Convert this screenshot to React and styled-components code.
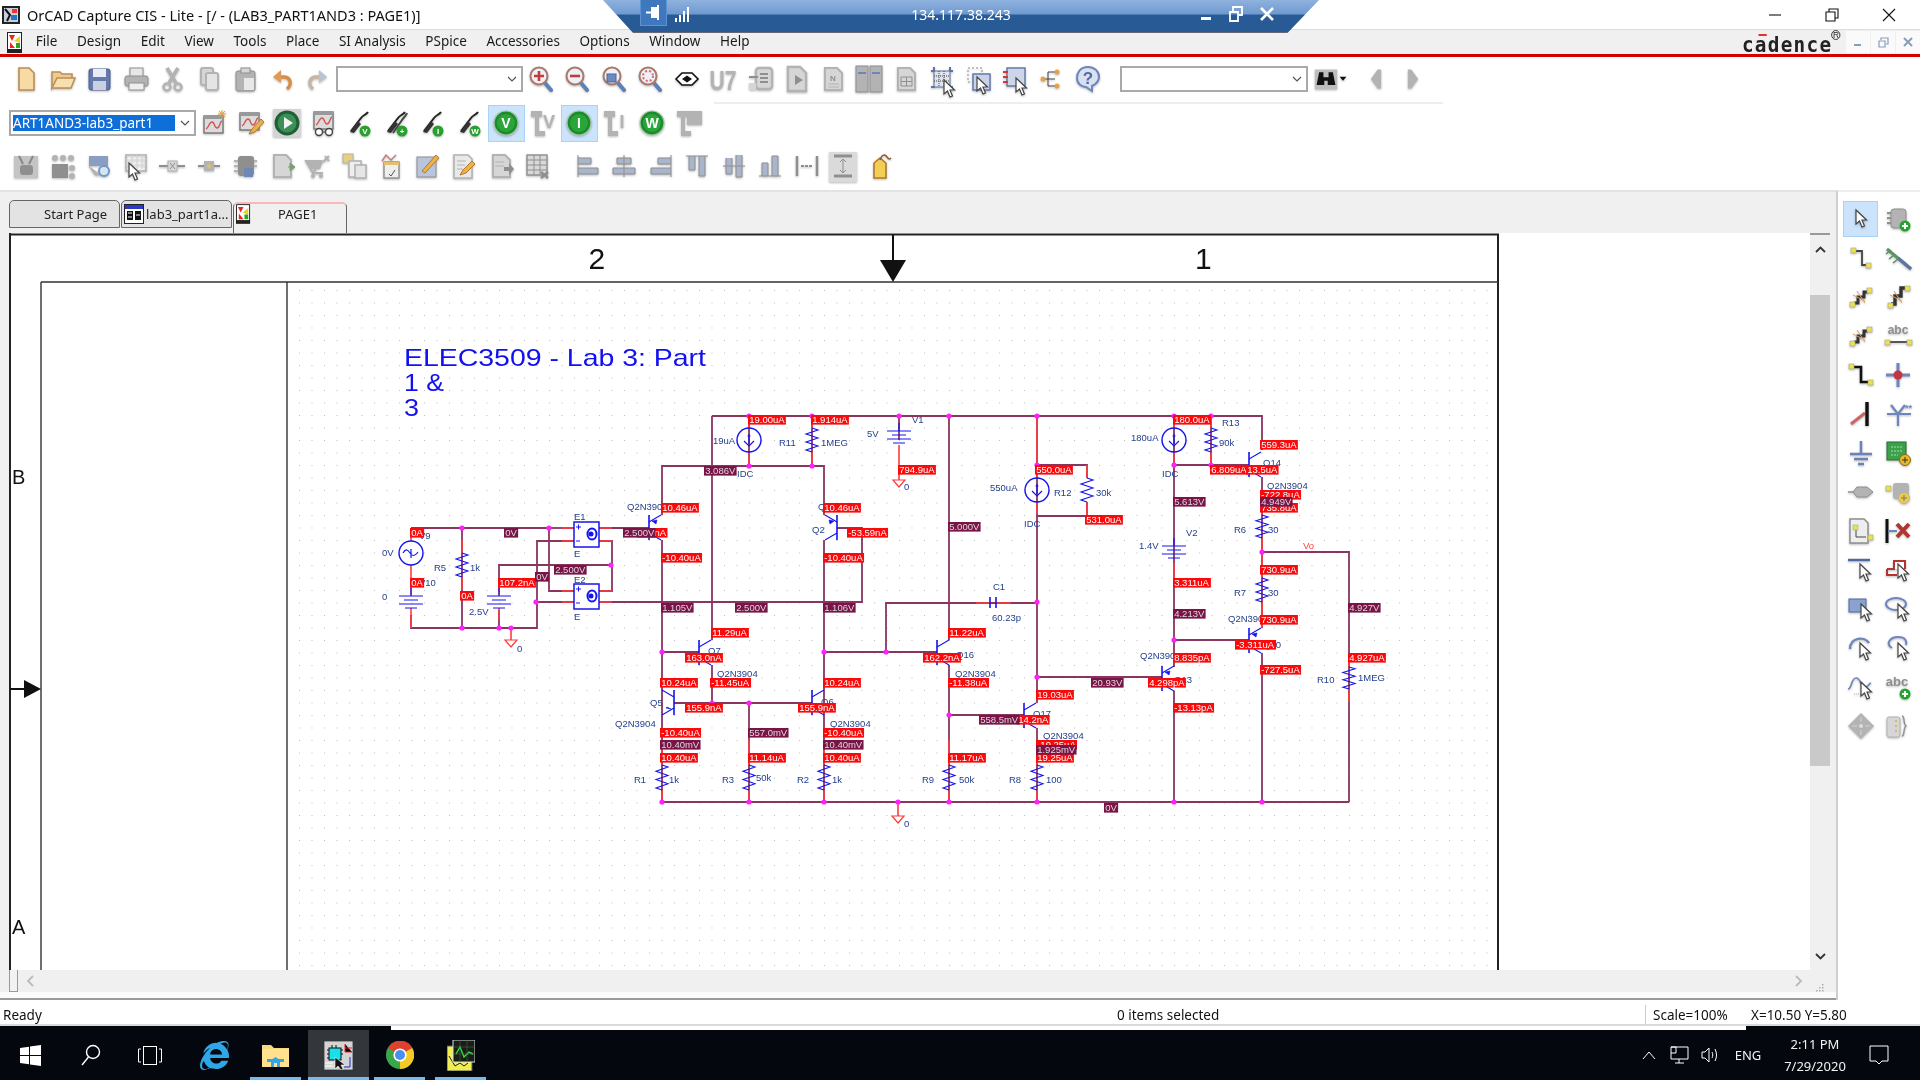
import React from "react";
import styled, { createGlobalStyle } from "styled-components";
import { FaInternetExplorer } from "react-icons/fa";

const GlobalStyle = createGlobalStyle`
  html, body { margin: 0; padding: 0; width: 1920px; height: 1080px; overflow: hidden; background: #fff; }
  #root { width: 1920px; height: 1080px; }
  * { box-sizing: border-box; }
`;

const UI = `"Noto Sans", "Open Sans", sans-serif`;
const ARIAL = `"Liberation Sans", Arial, sans-serif`;

const Screen = styled.div`
  position: relative; width: 1920px; height: 1080px; display: flex; flex-direction: column;
  font-family: ${UI}; color: #111; background: #fff; filter: blur(0.42px);
`;
const TitleBar = styled.header`
  height: 29px; flex: none; display: flex; align-items: center; background: #fff; padding-left: 2px; gap: 7px;
`;
const TitleText = styled.span`font-size: 14.5px; white-space: nowrap; color: #111;`;
const WinControls = styled.div`margin-left: auto; display: flex; align-items: center; padding-right: 3px;`;
const WinBtn = styled.button`
  width: 57px; height: 29px; border: 0; background: none; padding: 0; display: flex; align-items: center; justify-content: center; color: #111;
`;
const RemoteBar = styled.div`
  position: absolute; left: 603px; top: 0; width: 716px; height: 33px; color: #fff;
  clip-path: polygon(0 0, 100% 0, 95.6% 100%, 4.2% 100%);
  background: linear-gradient(#8fb2de 0, #6f9ad0 42%, #285a96 46%, #285a96 96%, #667 97%);
`;
const RemotePin = styled.div`
  position: absolute; left: 37px; top: 0; width: 27px; height: 26px; background: #3f78bd; border: 1px solid #5d93d2; border-top: 0;
  display: flex; align-items: center; justify-content: center;
`;
const RemoteSignal = styled.div`position: absolute; left: 71px; top: 5px;`;
const RemoteIp = styled.span`
  position: absolute; left: 0; right: 0; top: 6px; text-align: center; font-size: 14px; line-height: 18px; color: #fff; padding-left: 0;
`;
const RemoteCtl = styled.div`
  position: absolute; right: 45px; top: 6px; display: flex; gap: 17px; align-items: center;
`;
const MenuBar = styled.nav`
  height: 25px; flex: none; background: #f0f0f0; border-top: 1px solid #ddd; display: flex; align-items: center; padding-left: 7px;
`;
const MenuList = styled.div`display: flex; margin-left: 3px; margin-top: -3px;`;
const MenuItem = styled.span`font-size: 13.5px; color: #1a1a1a; padding: 0 9.8px; white-space: nowrap;`;
const Cadence = styled.div`
  position: relative; margin-left: auto; margin-right: 10px; font: bold 21px "DejaVu Sans Mono", monospace; letter-spacing: 1.4px;
  color: #222; line-height: 24px; top: 3px; transform: scaleX(.92);
`;
const CadenceBar = styled.i`position: absolute; left: 18px; top: 1px; width: 9px; height: 2px; background: #d33;`;
const CadenceMark = styled.i`
  position: absolute; right: -9px; top: -3px; font: 9px ${ARIAL}; width: 10px; height: 10px; line-height: 9px;
  border: 1px solid #333; border-radius: 50%; text-align: center; font-style: normal; letter-spacing: 0;
`;
const ChildCtl = styled.div`display: flex; gap: 1px; margin-right: 0;`;
const ChildBtn = styled.div`
  width: 24px; height: 22px; background: #fafafa; display: flex; align-items: center; justify-content: center;
`;
const RedRule = styled.div`height: 3px; flex: none; background: #d40000;`;
const ToolRow = styled.div`
  display: flex; align-items: center; height: ${p => p.$h}px; flex: none; padding-left: ${p => p.$pad}px; background: #fff;
`;
const RowRule = styled.div`height: 2px; flex: none; width: 729px; margin-left: 714px; background: #eee;`;
const ToolBtn = styled.div`
  width: ${p => p.$w || 36.5}px; flex: none; height: 37px; display: flex; align-items: center; justify-content: center;
  background: ${p => p.$hl ? "#cce4fb" : "transparent"};
  outline: ${p => p.$hl ? "1px solid #a8d2f6" : "none"}; outline-offset: -1px;
  margin-left: ${p => p.$ml || 0}px;
  margin-top: ${p => p.$mt || 0}px;
`;
const Combo = styled.div`
  width: ${p => p.$w}px; height: ${p => p.$h}px; flex: none; display: flex; align-items: center; border: 2px solid #a9a9a9; background: #fff;
  margin-left: ${p => p.$ml || 0}px; overflow: hidden; padding-left: 2px; position: relative; margin-top: ${p => p.$mt || 0}px;
`;
const ComboSel = styled.span`
  background: #0f6fd8; color: #fff; font-size: 13.5px; line-height: 16px; white-space: nowrap; overflow: hidden; width: 162px; direction: rtl;
  text-align: left;
`;
const Chevron = styled.svg`margin-left: auto; margin-right: 4px; flex: none;`;
const Body = styled.main`flex: none; height: 810px; display: flex;`;
const Workspace = styled.section`
  width: 1838px; flex: none; background: #f0f0f0; display: flex; flex-direction: column; border-top: 2px solid #e2e2e2; border-right: 2px solid #cfcfcf;
`;
const TabStrip = styled.div`height: 41px; flex: none; display: flex; align-items: flex-end; padding: 0 0 5px 9px; gap: 1px;`;
const Tab = styled.div`
  width: ${p => p.$w}px; height: ${p => p.$active ? 31 : 28}px; flex: none; display: flex; align-items: center; font-size: 13px; white-space: nowrap;
  border: 1px solid #666; border-bottom: ${p => p.$active ? "0" : "1px solid #666"}; border-radius: 5px 5px 0 0;
  background: ${p => p.$active ? "#f0f0f0" : "#e3e3e3"}; border-top-color: ${p => p.$active ? "#f7b9b9" : "#666"};
  border-top-width: ${p => p.$active ? 2 : 1}px; padding-left: 2px; gap: ${p => p.$gap || 0}px; overflow: hidden; margin-bottom: ${p => p.$active ? "-5px" : 0};
  padding-bottom: ${p => p.$active ? 10 : 0}px;
`;
const TabLabel = styled.span`padding-left: ${p => p.$pl || 0}px; color: #222;`;
const ViewRow = styled.div`
  height: 737px; flex: none; display: flex; padding-left: 9px;
`;
const Sheet = styled.svg`width: 1801px; height: 737px; flex: none; background: #fff; display: block;`;
const VScroll = styled.div`
  width: 20px; flex: none; display: flex; flex-direction: column; background: #f0f0f0; border-top: 2px solid #999;
`;
const VBtn = styled.div`height: 28px; flex: none; display: flex; align-items: center; justify-content: center;`;
const VThumb = styled.div`height: 471px; flex: none; background: #c9c9c9; margin-top: 32px;`;
const VTrack = styled.div`flex: 1;`;
const HScroll = styled.div`
  height: 22px; flex: none; display: flex; align-items: center; margin-left: 9px; width: 1821px; background: #f0f0f0; position: relative;
`;
const HThumb = styled.div`width: 9px; height: 22px; border: 1px solid #999; border-top: 0; background: #f2f2f2; flex: none;`;
const HArrow = styled.svg`flex: none; margin-left: ${p => p.$ml}px;`;
const Grip = styled.svg`flex: none; margin-left: 12px; margin-top: 12px;`;
const HFoot = styled.div`flex: 1; background: #fbfbfb; border-bottom: 2px solid #9a9a9a;`;
const Palette = styled.aside`
  flex: 1; background: #fff; display: grid; grid-template-columns: 37px 37px; grid-auto-rows: 39px; padding: 9px 0 0 4px; align-content: start; border-top: 2px solid #eee;
`;
const PalBtn = styled.div`
  display: flex; align-items: center; justify-content: center; height: 36px; width: 35px; margin-left: 1px;
  background: ${p => p.$hl ? "#cce4fb" : "transparent"};
  outline: ${p => p.$hl ? "1px solid #a8d2f6" : "none"}; outline-offset: -1px;
`;
const StatusBar = styled.footer`
  height: 26px; flex: none; display: flex; align-items: center; background: #fff; border-bottom: 2px solid #dadada; font-size: 13.5px; color: #111; padding-top: 5px;
`;
const StatusCell = styled.div`
  width: ${p => p.$w}px; flex: none; padding-left: ${p => p.$pl}px; height: 20px; line-height: 20px; white-space: nowrap;
  border-right: ${p => p.$rule ? "1px solid #ccc" : "0"};
`;
const StatusGap = styled.div`height: 4px; flex: none; display: flex;`;
const GapPart = styled.div`width: ${p => p.$w}px; flex: none; background: ${p => p.$c};`;
const Taskbar = styled.div`
  height: 50px; flex: none; background: #04070e; display: flex; align-items: center; color: #f2f2f2; position: relative;
`;
const TaskBtn = styled.div`
  width: ${p => p.$w}px; flex: none; height: 50px; display: flex; align-items: center; justify-content: center; position: relative;
  background: ${p => p.$active ? "#33363b" : "transparent"}; margin-left: ${p => p.$ml || 0}px;
`;
const RunLine = styled.i`
  position: absolute; left: ${p => p.$inset}px; right: ${p => p.$inset}px; bottom: 0; height: 3px; background: #76b9ed;
`;
const Tray = styled.div`margin-left: auto; display: flex; align-items: center; height: 50px; padding-right: 8px;`;
const TrayItem = styled.div`
  width: ${p => p.$w}px; flex: none; display: flex; align-items: center; justify-content: center; font-size: 13px;
`;
const Clock = styled.div`
  width: 62px; flex: none; text-align: center; font-size: 13px; line-height: 22px; margin-left: 12px; white-space: nowrap;
`;
const Ink = styled.text`
  font-family: ${ARIAL}; font-size: ${p => p.$s || 9.5}px; fill: ${p => p.$c || "#24418f"}; font-weight: ${p => p.$w || 400};
`;
const Probe = styled.text`font-family: ${ARIAL}; font-size: 9.5px; fill: ${p => p.$k === "m" ? "#dcdcdc" : "#fff"};`;
const ProbeBox = styled.rect`fill: ${p => p.$k === "m" ? "#7a1346" : "#fa0a0a"};`;
const GlyphSvg = styled.svg`display: block; flex: none; filter: drop-shadow(.5px 1px .8px rgba(0,0,0,.28)); overflow: visible;`;

/* ---------- toolbar glyphs ---------- */
const G = "#b3b3b3", GD = "#8f8f8f", GL = "#d6d6d6", BL = "#6d86bd";
const Cur = ({ x = 12, y = 8 }) => <path transform={`translate(${x} ${y})`} d="M0 0v14l3.5-3 2.5 6 2.5-1-2.5-6h4.5z" fill="#fff" stroke="#444" strokeWidth="1.2" />;
const Node = ({ x, y }) => <rect x={x} y={y} width="5" height="5" fill="#f2dd4a" stroke="#9a9" strokeWidth=".6" />;
const Mag = ({ children }) => <><path d="M18 18l6 7" stroke="#5c80b8" strokeWidth="4" strokeLinecap="round" /><circle cx="12" cy="11" r="8.5" fill="#eef0f7" stroke="#a97a6a" strokeWidth="2" />{children}</>;
const Wave = ({ x = 5, y = 6 }) => <g transform={`translate(${x} ${y})`}><rect width="19" height="17" fill="#dcdcdc" stroke="#777" strokeWidth="1.4" /><rect width="19" height="3" fill="#999" /><path d="M2 13c3-1 3-7 6-7s2 6 5 6 3-7 5-7" fill="none" stroke="#d45555" strokeWidth="1.4" /></g>;
const ProbeG = ({ t, c = "#27a02f", dbl }) => <>
  <path d="M5 22L15 9c2-3 5-3 7-6" fill="none" stroke="#222" strokeWidth="2" />
  <path d="M4 23l8-11 3 3-7 9z" fill="#333" />
  {dbl && <path d="M10 24l9-13c2-3 4-4 5-7" fill="none" stroke="#444" strokeWidth="2" />}
  <circle cx="19" cy="22" r="5.5" fill={c} /><text x="19" y="25" textAnchor="middle" fontSize="8" fontWeight="700" fontFamily={ARIAL} fill="#fff">{t}</text>
</>;
const Disc = ({ t }) => <><circle cx="14" cy="14" r="12" fill="#1b8b2b" stroke="#a9c9ad" strokeWidth="1.2" /><circle cx="14" cy="14" r="9" fill="#2aa53a" /><text x="14" y="19" textAnchor="middle" fontSize="14" fontWeight="700" fontFamily={ARIAL} fill="#fff">{t}</text></>;
const GreyT = ({ t }) => <><path d="M2 2h11v6h-3v14h6v5H6V8H2z" fill={G} /><text x="20" y="19" textAnchor="middle" fontSize="18" fontWeight="700" fontFamily={ARIAL} fill={G}>{t}</text></>;
const GDoc = ({ children, f = GL }) => <><path d="M6 3h12l5 5v17H6z" fill={f} stroke={G} strokeWidth="2" />{children}</>;
const Bars = ({ d }) => <path d={d} fill="#a9b5cc" stroke={GD} strokeWidth="1" />;
const Net = () => <><path d="M7 20h4v-6h6V9h4" fill="none" stroke="#333" strokeWidth="3" /><path d="M6 12l12 6M10 8l8 12" stroke="#e0a060" strokeWidth="1" /><Node x="3" y="19" /><Node x="20" y="5" /></>;

const ICONS = {
  new: <path d="M7 3h10l5 5v17H7z" fill="#f6dca4" stroke="#b98f57" strokeWidth="1.6" />,
  open: <><path d="M3 7h8l2 2h10v5H8L3 23z" fill="#eeca8e" stroke="#b98f57" strokeWidth="1.5" /><path d="M3 23l5-10h18l-4 10z" fill="#f7e0b0" stroke="#b98f57" strokeWidth="1.5" /></>,
  save: <><rect x="4" y="4" width="21" height="21" rx="2" fill="#6479ad" stroke="#4d5f8e" /><rect x="8" y="4" width="13" height="8" fill="#e8ecf4" /><rect x="8" y="16" width="13" height="9" fill="#c9d0e0" /></>,
  print: <><rect x="8" y="3" width="13" height="9" fill="#e6e6e6" stroke={GD} /><rect x="3" y="11" width="23" height="10" rx="2" fill={G} stroke={GD} /><rect x="7" y="18" width="15" height="7" fill="#eee" stroke={GD} /></>,
  cut: <><path d="M9 3l9 15M20 3l-9 15" stroke={G} strokeWidth="3.5" /><circle cx="9" cy="22" r="3.5" fill="none" stroke={G} strokeWidth="2.5" /><circle cx="20" cy="22" r="3.5" fill="none" stroke={G} strokeWidth="2.5" /></>,
  copy: <><rect x="6" y="3" width="12" height="17" rx="2" fill={GL} stroke={G} strokeWidth="2" /><rect x="11" y="8" width="12" height="17" rx="2" fill="#e4e4e4" stroke={G} strokeWidth="2" /></>,
  paste: <><rect x="5" y="6" width="19" height="20" rx="2" fill={G} stroke={GD} /><rect x="10" y="3" width="9" height="5" fill={GL} stroke={GD} /><rect x="13" y="13" width="10" height="12" fill="#e8e8e8" /></>,
  undo: <><path d="M19 24c5-4 4-11-2-12H11" fill="none" stroke="#d98d44" strokeWidth="3.4" /><path d="M13 5L5 12l8 6z" fill="#e09a55" /></>,
  redo: <><path d="M9 24c-5-4-4-11 2-12h6" fill="none" stroke="#c5b6a4" strokeWidth="3.4" /><path d="M15 5l8 7-8 6z" fill="#b9c3d2" /></>,
  zin: <Mag><path d="M7 11h10M12 6v10" stroke="#c33b3b" strokeWidth="2.6" /></Mag>,
  zout: <Mag><path d="M7 11h10" stroke="#c33b3b" strokeWidth="2.6" /></Mag>,
  zarea: <Mag><rect x="7" y="9" width="9" height="8" fill="#6d8abf" stroke="#4b659a" /></Mag>,
  zall: <Mag><circle cx="12" cy="11" r="5" fill="none" stroke="#d96b6b" strokeWidth="2" strokeDasharray="2 2" /></Mag>,
  eye: <><path d="M3 14l6-6h10l6 6-6 6H9z" fill="#fff" stroke="#111" strokeWidth="1.6" /><path d="M9 14l5-3.5 5 3.5-5 3.5z" fill="#111" /></>,
  u7: <text x="14" y="25" textAnchor="middle" fontFamily={ARIAL} fontWeight="700" fontSize="27" fill={G} textLength="27" lengthAdjust="spacingAndGlyphs">U7</text>,
  pdoc: <><rect x="10" y="3" width="16" height="21" rx="3" fill={GL} stroke={G} strokeWidth="2.4" /><path d="M3 12h9M14 9h8M14 13h8M14 17h8" stroke={GD} strokeWidth="2" /><rect x="3" y="18" width="7" height="7" fill={GL} /></>,
  arrdoc: <><path d="M6 2h12l6 6v18H6z" fill={GL} stroke={G} strokeWidth="2.4" /><path d="M13 15l8-5v10z" fill={GD} transform="rotate(180 17 15)" /></>,
  ndoc: <GDoc><text x="11" y="16" fontSize="8" fontWeight="700" fontFamily={ARIAL} fill={GD}>N</text><path d="M9 19h11M9 22h11" stroke={G} /></GDoc>,
  twin: <><rect x="1" y="1" width="12" height="26" fill={G} stroke={GD} /><rect x="15" y="1" width="12" height="26" fill={G} stroke={GD} /><path d="M3 8h8M17 8h8" stroke={BL} strokeWidth="2" /></>,
  table: <GDoc><path d="M9 12h11v9H9zM9 16.5h11M14.5 12v9" fill="none" stroke={GD} /></GDoc>,
  gridsel: <><rect x="6" y="6" width="16" height="16" fill="#dfe3ec" stroke="#5d74a6" /><path d="M6 11h16M6 16h16M11 6v16M16 6v16" stroke="#444" strokeDasharray="1 1" /><path d="M3 6h4M21 6h4M3 22h4M21 22h4M6 2v4M22 2v4" stroke="#5d74a6" strokeWidth="2" /><Cur x="16" y="15" /></>,
  dragsel: <><rect x="3" y="3" width="14" height="14" fill="none" stroke={GD} strokeDasharray="2 2" /><rect x="8" y="9" width="17" height="16" fill="#c9d3e6" stroke="#5d74a6" strokeWidth="1.4" /><Cur x="12" y="12" /></>,
  pinsel: <><rect x="6" y="3" width="18" height="18" fill="#ccd6e8" stroke="#5d74a6" strokeWidth="1.4" /><path d="M2 7h5M2 12h5M2 17h5" stroke="#d33" strokeWidth="2" /><Cur x="15" y="13" /></>,
  tree: <><path d="M5 14h5M10 7v14M10 7h7M10 21h7M10 14h7" stroke="#444" fill="none" /><circle cx="5" cy="14" r="2.5" fill="#e4a24e" /><circle cx="19" cy="7" r="2.5" fill="#e4a24e" /><circle cx="19" cy="21" r="2.5" fill="#e4a24e" /></>,
  help: <><path d="M14 2C6 2 3 8 3 13c0 6 5 9 9 9l6 4v-5c4-2 7-5 7-9 0-6-5-10-11-10z" fill="#d8e0f2" stroke="#6d86bd" strokeWidth="2" /><text x="14" y="19" textAnchor="middle" fontSize="17" fontWeight="700" fontFamily={ARIAL} fill="#54699d">?</text></>,
  bino: <><rect x="1" y="3" width="26" height="23" fill="#bdbdbd" /><path d="M6 6h5v6h6V6h5l3 15h-9v-5h-4v5H3z" fill="#111" /></>,
  drop: <path d="M8 10h12l-6 7z" fill="#111" />,
  prev: <path d="M20 3v22h-4L8 14l8-11z" fill={G} />,
  next: <path d="M8 3v22h4l8-11-8-11z" fill={G} />,
  spark: <><Wave x="4" y="7" /><path d="M22 1v8M18 5h8M19 2l6 6M25 2l-6 6" stroke="#e0a040" /></>,
  wedit: <><Wave x="3" y="4" /><path d="M12 25l3-5 9-10 3 3-9 10z" fill="#eab04a" stroke="#b5772c" /></>,
  play: <><rect x="0" y="0" width="28" height="28" fill="#d4d4d4" /><circle cx="14" cy="14" r="12.5" fill="#1f5f35" /><circle cx="14" cy="14" r="9.5" fill="#3c8f55" /><path d="M11 8l9 6-9 6z" fill="#f3f3f3" /></>,
  wglass: <><Wave x="4" y="3" /><circle cx="9" cy="23" r="3.5" fill="#fff" stroke="#444" strokeWidth="1.4" /><circle cx="19" cy="23" r="3.5" fill="#fff" stroke="#444" strokeWidth="1.4" /><path d="M12 23h4" stroke="#444" /></>,
  p1: <ProbeG t="V" />, p2: <ProbeG t="+" dbl />, p3: <ProbeG t="I" />, p4: <ProbeG t="W" />,
  dV: <Disc t="V" />, dI: <Disc t="I" />, dW: <Disc t="W" />,
  tV: <GreyT t="V" />, tI: <GreyT t="I" />,
  tP: <><path d="M2 2h11v6h-3v14h6v5H6V8H2z" fill={G} /><rect x="12" y="2" width="15" height="14" fill={G} /></>,
  r1: <><rect x="2" y="4" width="24" height="22" fill="#c4c4c4" /><path d="M7 4l4 8M21 4l-4 8" stroke="#888" strokeWidth="2" /><rect x="8" y="13" width="13" height="10" rx="3" fill={GD} /></>,
  r2: <><rect x="3" y="12" width="16" height="14" fill={GD} /><circle cx="6" cy="6" r="3" fill={G} /><circle cx="14" cy="6" r="3" fill={G} /><circle cx="22" cy="6" r="3" fill={G} /><circle cx="23" cy="16" r="3" fill={G} /><circle cx="23" cy="24" r="3" fill={G} /></>,
  r3: <><path d="M4 4h19v10H4z" fill="#8b9dc0" /><path d="M4 14l6 9h6" fill={G} stroke={G} /><circle cx="19" cy="19" r="5" fill="#d9e4f2" stroke="#6d9bc7" strokeWidth="2" /></>,
  r4: <><rect x="4" y="3" width="20" height="16" fill="none" stroke={G} strokeWidth="1.6" /><path d="M10 3v14M15 3v14M20 3v14M4 8h20M4 13h20" stroke={GL} /><Cur x="7" y="11" /></>,
  r5: <><path d="M1 14h26" stroke={GD} strokeWidth="2" /><rect x="10" y="9" width="9" height="10" fill={GL} stroke={G} /><path d="M12 11l5 6M17 11l-5 6" stroke={GD} /></>,
  r6: <><path d="M3 14h22" stroke={GD} strokeWidth="2" /><rect x="9" y="9" width="10" height="10" fill={G} /><circle cx="14" cy="14" r="2" fill="#e2c070" /></>,
  r7: <><rect x="7" y="4" width="16" height="20" rx="3" fill={GD} /><path d="M3 9h4M3 14h4M3 19h4M23 9h3M23 14h3" stroke={G} strokeWidth="2" /><rect x="13" y="16" width="9" height="9" fill="#6f87b4" /></>,
  r8: <GDoc><path d="M20 15h6M22 11l5 4-5 4z" fill="#7aa070" stroke="#7aa070" /></GDoc>,
  r9: <><path d="M2 9l7 12L17 9zM8 21h11" fill="none" stroke={G} strokeWidth="2" /><path d="M3 9h16l-3 8H7z" fill={G} /><circle cx="9" cy="24" r="2" fill={G} /><circle cx="17" cy="24" r="2" fill={G} /><path d="M19 10l6-6M21 4l4 5" stroke={G} strokeWidth="2" /></>,
  r10: <><rect x="2" y="2" width="10" height="9" fill="#e8cf7a" stroke={G} /><rect x="8" y="9" width="12" height="16" fill="#eee" stroke={G} strokeWidth="1.6" /><rect x="14" y="13" width="11" height="13" fill="#e6e6e6" stroke={G} strokeWidth="1.6" /></>,
  r11: <><path d="M5 9l4-6 5 5 5-5" fill="none" stroke="#c27b7b" strokeWidth="1.4" /><rect x="7" y="10" width="15" height="16" fill="#eee" stroke={GD} strokeWidth="1.4" /><rect x="7" y="10" width="15" height="3" fill="#e2c070" /><path d="M12 22l2 2 4-6" fill="none" stroke="#555" /></>,
  r12: <><rect x="3" y="5" width="19" height="20" fill="#b9c5dc" stroke={GD} /><path d="M8 19L22 3l3 3-14 15z" fill="#e8b44a" stroke="#b5772c" /></>,
  r13: <><path d="M4 3h14l4 4v19H4z" fill="#e9e9e9" stroke={G} strokeWidth="1.6" /><path d="M7 9h9M7 13h8M7 17h6" stroke={G} /><path d="M10 23l3-5 9-9 3 3-9 9z" fill="#e8b44a" stroke="#b5772c" /></>,
  r14: <GDoc><path d="M8 10h9M8 14h9" stroke={G} /><path d="M17 15h5v-4l5 6-5 6v-4h-5z" fill={GD} /></GDoc>,
  r15: <><rect x="4" y="3" width="20" height="20" fill="#d8d8d8" stroke={GD} strokeWidth="1.4" /><path d="M4 8h20M4 13h20M4 18h20M11 3v20M17 3v20" stroke={GD} /><path d="M18 20l7 6M25 20l-7 6" stroke={GD} strokeWidth="2.4" /></>,
  a1: <Bars d="M4 3v22M4 6h13v6H4M4 16h20v6H4" />,
  a2: <Bars d="M14 3v22M7 6h14v6H7zM3 16h22v6H3z" />,
  a3: <Bars d="M24 3v22M24 6H11v6h13M24 16H4v6h20" />,
  a4: <Bars d="M3 4h22M6 4v14h6V4M16 4v20h6V4" />,
  a5: <Bars d="M3 14h22M6 6v16h6V6M16 3v22h6V3" />,
  a6: <Bars d="M3 24h22M6 24V11h6v13M16 24V4h6v20" />,
  a7: <><path d="M4 4v20M24 4v20" stroke={GD} strokeWidth="2.4" /><path d="M8 14h12" stroke={GD} strokeWidth="2" strokeDasharray="3 1" /></>,
  a8: <><rect width="28" height="30" fill="#dadada" /><path d="M5 4h18M5 24h18" stroke={GD} strokeWidth="3" /><path d="M14 8v12M11 10l3-3 3 3M11 18l3 3 3-3" fill="none" stroke={GD} /></>,
  tag: <><path d="M8 11l6-5 6 5v15H8z" fill="#f1cf56" stroke="#b5772c" strokeWidth="1.6" /><path d="M14 8c2-6 5-6 7-3s3 2 4 1" fill="none" stroke="#8a5a2c" strokeWidth="1.4" /></>,
  pointer: <Cur x="9" y="5" />,
  chipAdd: <><rect x="7" y="4" width="15" height="19" rx="3" fill={G} stroke={GD} /><path d="M3 8h4M3 13h4M3 18h4" stroke={GD} strokeWidth="2" /><circle cx="21" cy="21" r="5.5" fill="#26a32e" /><path d="M18 21h6M21 18v6" stroke="#fff" strokeWidth="2" /></>,
  wireS: <><path d="M8 7h7v14h5" fill="none" stroke="#444" strokeWidth="1.8" /><Node x="4" y="4" /><Node x="19" y="19" /></>,
  busD: <><path d="M3 5l24 20" stroke="#5a9460" strokeWidth="3" /><path d="M14 14l13 11" stroke="#5d74a6" strokeWidth="3" /><path d="M2 10l5-4M5 15l5-4M9 19l5-4" stroke="#5a9460" strokeWidth="1.6" /></>,
  netA: <Net />, netB: <><path d="M7 21h4v-8h6V5h5" fill="none" stroke="#333" strokeWidth="3.4" /><path d="M6 12l12 6M10 8l8 12" stroke="#e0a060" /><Node x="4" y="20" /><Node x="21" y="3" /></>,
  abcLine: <><text x="14" y="12" textAnchor="middle" fontSize="12" fontFamily={ARIAL} fontWeight="700" fill={GD}>abc</text><path d="M4 20h20" stroke="#333" strokeWidth="1.6" /><Node x="1" y="18" /><Node x="23" y="18" /></>,
  wireB: <><path d="M6 6h8v15h8" fill="none" stroke="#111" strokeWidth="2.6" /><Node x="2" y="3" /><Node x="21" y="19" /></>,
  junction: <><path d="M2 14h24" stroke={BL} strokeWidth="3" /><path d="M14 2v24" stroke={BL} strokeWidth="3" /><circle cx="14" cy="14" r="4.5" fill="#c3353f" /></>,
  busEntry: <><path d="M4 24l14-11" stroke="#c66" strokeWidth="3" /><path d="M20 2v24" stroke="#111" strokeWidth="3.4" /></>,
  ncp: <><path d="M3 14h24M14 14v12M7 5l7 9 7-9" stroke={BL} strokeWidth="2.2" fill="none" /><text x="21" y="11" fontSize="9" fontWeight="700" fontFamily={ARIAL} fill={BL}>**</text></>,
  ground: <><path d="M14 2v13M3 15h22M7 20h14M11 25h6" stroke="#6b83b8" strokeWidth="2.4" /></>,
  gridAdd: <><rect x="3" y="3" width="19" height="18" fill="#3da04a" stroke="#277032" /><path d="M7 8h11M7 12h11M7 16h7" stroke="#a8e0ae" strokeDasharray="2 1" /><circle cx="21" cy="21" r="5.5" fill="#e8b828" stroke="#8a6a12" /><path d="M18 21h6M21 18v6" stroke="#333" /></>,
  oval: <path d="M1 14h5l4-5h10l6 5-6 5H10l-4-5z" fill={G} stroke={GD} />,
  hierAdd: <><rect x="9" y="5" width="16" height="16" rx="3" fill={G} /><Node x="2" y="8" /><circle cx="20" cy="20" r="5.5" fill="#f0cc40" stroke={G} /><path d="M17 20h6M20 17v6" stroke="#777" /></>,
  pageLink: <><path d="M3 2h14l4 4v20H3z" fill="#eee" stroke={GD} strokeWidth="1.5" /><path d="M9 12v8h10" fill="none" stroke="#444" /><Node x="6" y="8" /><Node x="21" y="18" /></>,
  blueX: <><path d="M3 2v24" stroke="#111" strokeWidth="3" /><path d="M4 14h9" stroke={BL} strokeWidth="2" /><path d="M13 7l12 13M25 7L13 20" stroke="#b3352f" strokeWidth="4" /></>,
  lineSel: <><path d="M1 4h22" stroke="#4d6aa0" strokeWidth="2.4" /><Cur x="13" y="8" /></>,
  polySel: <><path d="M3 13h7V5h11v8" fill="#fff" stroke="#b3352f" strokeWidth="2" /><path d="M3 13v6h10" fill="none" stroke="#b3352f" strokeWidth="2" /><Cur x="14" y="8" /></>,
  rectSel: <><rect x="2" y="4" width="17" height="13" fill="#8ba2d0" stroke="#4d6aa0" /><Cur x="14" y="9" /></>,
  ellSel: <><ellipse cx="12" cy="9" rx="10" ry="6" fill="none" stroke={BL} strokeWidth="2" /><Cur x="14" y="9" /></>,
  arcSel: <><path d="M3 15C3 3 18 2 22 9" fill="none" stroke={BL} strokeWidth="2.4" /><Cur x="13" y="9" /></>,
  loopSel: <><path d="M8 14C1 10 6 3 14 3s9 5 8 8" fill="none" stroke={BL} strokeWidth="2" /><Cur x="14" y="9" /></>,
  waveSel: <><path d="M1 16c4 0 3-11 8-11s4 8 8 9 4-3 7-4" fill="none" stroke={BL} strokeWidth="1.6" /><path d="M7 21h8" stroke={G} strokeDasharray="1 1" /><Cur x="14" y="9" /></>,
  abcAdd: <><text x="13" y="13" textAnchor="middle" fontSize="13" fontWeight="700" fontFamily={ARIAL} fill={GD}>abc</text><circle cx="21" cy="21" r="5.5" fill="#26a32e" /><path d="M18 21h6M21 18v6" stroke="#fff" strokeWidth="2" /></>,
  diamond: <><path d="M14 1l13 13-13 13L1 14z" fill={G} /><circle cx="14" cy="14" r="2" fill="#ddd" /><path d="M14 5v5M14 18v5M5 14h5M18 14h5" stroke="#d4d4d4" /></>,
  bracket: <><rect x="3" y="5" width="13" height="20" rx="2" fill={GL} stroke={G} /><circle cx="12" cy="9" r="1" fill="#d8b040" /><circle cx="12" cy="14" r="1" fill="#d8b040" /><circle cx="12" cy="19" r="1" fill="#d8b040" /><path d="M18 4c3 0 1 8 4 10-3 2-1 10-4 10" fill="none" stroke={GD} strokeWidth="1.4" /></>,
};
const Glyph = ({ name, size = 28 }) => <GlyphSvg width={size} height={size} viewBox="0 0 28 28">{ICONS[name]}</GlyphSvg>;

const CombChevron = () => <Chevron width="10" height="6" viewBox="0 0 10 6"><path d="M1 1l4 4 4-4" fill="none" stroke="#555" strokeWidth="1.2" /></Chevron>;

const ROW1A = ["new", "open", "save", "print", "cut", "copy", "paste", "undo", "redo"];
const ROW1B = ["zin", "zout", "zarea", "zall", "eye", "u7", "pdoc", "arrdoc", "ndoc", "twin", "table", "gridsel", "dragsel", "pinsel", "tree", "help"];
const ROW2 = ["spark", "wedit", "play", "wglass", "p1", "p2", "p3", "p4", "dV", "tV", "dI", "tI", "dW", "tP"];
const ROW3A = ["r1", "r2", "r3", "r4", "r5", "r6", "r7", "r8", "r9", "r10", "r11", "r12", "r13", "r14", "r15"];
const ROW3B = ["a1", "a2", "a3", "a4", "a5", "a6", "a7", "a8", "tag"];
const PALETTE = ["pointer", "chipAdd", "wireS", "busD", "netA", "netB", "netA", "abcLine", "wireB", "junction", "busEntry", "ncp", "ground", "gridAdd", "oval", "hierAdd", "pageLink", "blueX", "lineSel", "polySel", "rectSel", "ellSel", "arcSel", "loopSel", "waveSel", "abcAdd", "diamond", "bracket"];
const MENUS = ["File", "Design", "Edit", "View", "Tools", "Place", "SI Analysis", "PSpice", "Accessories", "Options", "Window", "Help"];

/* ---------- schematic data, in page pixels ---------- */
const WIRE = "#8a3560", STUB = "#ff3b3b", BLUE = "#1414f0";
const WIRES = [
  "411,528 549,528", "462,528 462,628", "411,615 411,628 537,628 537,541 574,541", "537,602 574,602", "549,528 549,591 574,591",
  "549,528 574,528", "599,528 649,528", "599,541 612,541 612,591 599,591", "499,592 499,565 612,565", "499,610 499,628",
  "599,602 862,602 862,528 837,528", "662,515 662,466 824,466 824,515", "662,540 662,802", "824,540 824,802", "662,652 699,652",
  "712,416 712,640", "712,416 1262,416 1262,450", "712,665 712,703", "674,703 812,703", "749,703 749,802", "662,802 1349,802",
  "824,652 937,652", "886,652 886,603 1037,603", "949,416 949,640", "949,665 949,802", "949,715 1024,715", "1037,416 1037,703",
  "1037,728 1037,802", "1037,465 1087,465 1087,478", "1087,502 1087,516 1037,516", "1037,677 1162,677", "1174,416 1174,667",
  "1174,691 1174,802", "1174,640 1249,640", "1174,465 1249,465", "1211,416 1211,465", "1262,477 1262,628", "1262,653 1262,802",
  "1262,552 1349,552 1349,802", "749,416 749,466", "812,416 812,466", "899,416 899,440", "662,466 749,466",
];
const STUBS = [
  "411,528 411,541", "411,565 411,595", "411,608 411,628", "462,540 462,553", "462,577 462,590", "499,580 499,595", "499,608 499,620",
  "562,528 574,528", "562,541 574,541", "562,591 574,591", "562,602 574,602", "599,528 612,528", "599,541 612,541", "599,591 612,591", "599,602 612,602",
  "749,416 749,428", "749,452 749,466", "812,428 812,416", "812,452 812,466", "899,445 899,480", "511,628 511,640", "898,802 898,816",
  "1037,416 1037,478", "1037,502 1037,514", "1087,465 1087,478", "1087,502 1087,515", "1174,428 1174,416", "1174,452 1174,465", "1211,428 1211,416", "1211,452 1211,465",
  "1174,563 1174,580", "1262,503 1262,515", "1262,538 1262,552", "1262,552 1262,578", "1262,602 1262,628", "976,603 990,603", "996,603 1011,603",
  "1349,655 1349,667", "1349,689 1349,702", "662,740 662,765", "662,790 662,802", "749,740 749,765", "749,790 749,802", "824,740 824,765", "824,790 824,802",
  "949,740 949,765", "949,790 949,802", "1037,740 1037,765", "1037,790 1037,802",
];
const NODES = [[462,528],[549,528],[462,628],[499,628],[511,628],[536,602],[611,565],[662,652],[824,652],[886,652],[712,703],[749,703],[749,416],[812,416],[749,466],[812,466],[899,416],[949,416],[1037,416],[1174,416],[1211,416],[1037,465],[1174,465],[1211,465],[1037,602],[1037,677],[949,715],[1174,640],[1262,552],[662,802],[749,802],[824,802],[898,802],[949,802],[1037,802],[1174,802],[1262,802]];
const RESISTORS = [[462,553,577],[812,428,452],[662,765,790],[749,765,790],[824,765,790],[949,765,790],[1037,765,790],[1087,478,502],[1211,428,452],[1262,515,538],[1262,578,602],[1349,667,689]];
const BJTS = [
  { x: 649, t: 515, d: 1, a: "top" }, { x: 837, t: 515, d: -1, a: "top" }, { x: 699, t: 640, d: 1, a: "bot" }, { x: 674, t: 690, d: -1, a: "bot" },
  { x: 812, t: 690, d: 1, a: "bot" }, { x: 937, t: 640, d: 1, a: "bot" }, { x: 1024, t: 703, d: 1, a: "bot" }, { x: 1162, t: 666, d: 1, a: "top" },
  { x: 1249, t: 452, d: 1, a: "bot" }, { x: 1249, t: 628, d: 1, a: "top" },
];
const SOURCES = [[749,440],[1037,490],[1174,440]];
const BATTERIES = [[411,596],[499,596],[899,431],[1174,546]];
const GROUNDS = [[511,640],[898,816],[899,480]];
const PARTS = [
  ["0V",382,556],["V9",419,539],["V10",419,586],["0",382,600],["R5",434,571],["1k",470,571],["2.5V",469,615],["E1",574,520],["E",574,557],["E2",574,583],["E",574,620],["0",517,652],
  ["Q2N3904",627,510],["Q1",650,535],["19uA",713,444],["IDC",737,477],["R11",779,446],["1MEG",821,446],["Q2N3904",818,510],["Q2",812,533],["Q7",708,654],["Q2N3904",717,677],
  ["Q5",650,706],["Q2N3904",615,727],["R1",634,783],["1k",669,783],["R3",722,783],["50k",756,781],["R2",797,783],["1k",832,783],["Q6",821,705],["Q2N3904",830,727],["60.23p",992,621],
  ["Q16",956,658],["Q2N3904",955,677],["Q17",1033,717],["Q2N3904",1043,739],["R9",922,783],["50k",959,783],["R8",1009,783],["100",1046,783],["0",904,827],
  ["V1",912,423],["5V",867,437],["0",904,490],["550uA",990,491],["R12",1054,496],["30k",1096,496],["IDC",1024,527],["C1",993,590],["180uA",1131,441],["R13",1222,426],["90k",1219,446],
  ["IDC",1162,477],["Q14",1263,466],["Q2N3904",1267,489],["V2",1186,536],["1.4V",1139,549],["R6",1234,533],["30",1268,533],["R7",1234,596],["30",1268,596],["Q2N3904",1228,622],["Q10",1263,648],
  ["Q2N3904",1140,659],["Q13",1174,683],["R10",1317,683],["1MEG",1358,681],
];
const PROBES = [
  ["r","0A",410,528],["r","0A",410,578],["r","0A",460,591],["r","107.2nA",498,578],["r","10.46uA",661,503],["r","-9.9nA",637,528],["r","-10.40uA",661,553],["r","19.00uA",748,415],["r","1.914uA",811,415],
  ["r","10.46uA",823,503],["r","-53.59nA",847,528],["r","-10.40uA",823,553],["r","11.29uA",711,628],["r","163.0nA",685,653],["r","10.24uA",660,678],["r","-11.45uA",710,678],["r","155.9nA",685,703],
  ["r","-10.40uA",660,728],["r","10.40uA",660,753],["r","10.24uA",823,678],["r","155.9nA",798,703],["r","-10.40uA",823,728],["r","10.40uA",823,753],["r","11.14uA",748,753],["r","11.22uA",948,628],
  ["r","162.2nA",923,653],["r","-11.38uA",948,678],["r","11.17uA",948,753],["r","19.03uA",1036,690],["r","14.2nA",1017,715],["r","-19.25uA",1036,740],["r","19.25uA",1036,753],["r","794.9uA",898,465],
  ["r","550.0uA",1035,465],["r","531.0uA",1085,515],["r","180.0uA",1173,415],["r","559.3uA",1260,440],["r","6.809uA",1210,465],["r","13.5uA",1246,465],["r","-722.8uA",1260,490],["r","735.8uA",1260,503],
  ["r","730.9uA",1260,565],["r","3.311uA",1173,578],["r","730.9uA",1260,615],["r","-3.311uA",1235,640],["r","8.835pA",1173,653],["r","-727.5uA",1260,665],["r","4.927uA",1348,653],["r","4.298pA",1148,678],["r","-13.13pA",1173,703],
  ["m","0V",504,528],["m","2.500V",623,528],["m","3.086V",704,466],["m","2.500V",554,565],["m","0V",535,572],["m","1.105V",661,603],["m","2.500V",735,603],["m","1.106V",823,603],["m","10.40mV",660,740],
  ["m","557.0mV",748,728],["m","10.40mV",823,740],["m","558.5mV",979,715],["m","1.925mV",1036,745],["m","5.000V",948,522],["m","5.613V",1173,497],["m","4.949V",1260,497],["m","4.213V",1173,609],["m","4.927V",1348,603],["m","20.93V",1091,678],["m","0V",1104,803],
];
const charW = c => "0123456789uanp".includes(c) ? .556 : c === "." ? .278 : c === "-" ? .333 : c === "m" ? .833 : .667;
const probeW = s => [...s].reduce((a, c) => a + charW(c), 0) * 9.5 + 2.5;

const Zig = ({ x, a, b }) => {
  const n = 6, st = (b - a) / n;
  let d = `M${x} ${a}`;
  for (let i = 0; i < n; i++) d += ` L${x + (i % 2 ? -6 : 6)} ${a + st * (i + .5)}`;
  d += ` L${x} ${b}`;
  return <path d={d} fill="none" stroke={BLUE} strokeWidth="1.1" />;
};
const Bjt = ({ x, t, d, a }) => {
  const b = t + 25, cx = x + 12 * d;
  return <g stroke={BLUE} fill="none">
    <path d={`M${x} ${t}V${b}`} strokeWidth="1.6" />
    <path d={`M${x} ${t + 7}L${cx} ${t}M${x} ${b - 7}L${cx} ${b}`} strokeWidth="1.1" />
    <path d={`M${x + 3 * d} ${a === "top" ? t + 6 : b - 6}l${5 * d} -1 ${-1 * d} ${a === "top" ? 4 : -1}l${-4 * d} ${a === "top" ? -3 : 2}z`} fill={BLUE} strokeWidth=".6" />
  </g>;
};
const Source = ({ x, y }) => <g stroke={BLUE} fill="none" strokeWidth="1.2">
  <circle cx={x} cy={y} r="12" strokeWidth="1.4" /><path d={`M${x} ${y - 6}v10M${x - 5} ${y + 1}l5 5 5-5M${x - 1.5} ${y - 4}h3`} />
</g>;
const Battery = ({ x, y }) => <g stroke={BLUE} strokeWidth="1.2">
  <path d={`M${x - 12} ${y}h24M${x - 7} ${y + 4}h14M${x - 12} ${y + 8}h24M${x - 6} ${y + 12}h12M${x} ${y - 8}v8`} />
</g>;
const Ground = ({ x, y }) => <path d={`M${x - 6} ${y}h12l-6 7z`} fill="#fff" stroke={STUB} strokeWidth="1.2" />;
const OpBox = ({ x, y }) => <g>
  <rect x={x} y={y} width="25" height="25" fill="#fff" stroke={BLUE} strokeWidth="1.5" />
  <path d={`M${x + 2} ${y + 5}h5M${x + 4.5} ${y + 2.5}v5M${x + 2} ${y + 19}h4`} stroke={BLUE} />
  <ellipse cx={x + 18} cy={y + 12} rx="4.5" ry="5.5" fill="#fff" stroke={BLUE} strokeWidth="2" />
  <circle cx={x + 17} cy={y + 12} r="2.5" fill={BLUE} />
</g>;

const Schematic = () => <Sheet viewBox="9 233 1801 737">
  <defs>
    <pattern id="dots" x="299" y="290" width="12.5" height="12.5" patternUnits="userSpaceOnUse"><rect width="1" height="1" fill="#bcbcbc" /></pattern>
  </defs>
  <rect x="299" y="290" width="1199" height="680" fill="url(#dots)" />
  <path d="M9 234.5H1498V970M10 233V970" fill="none" stroke="#222" strokeWidth="2" />
  <path d="M41 282H1498M41 282V970M287 282V970" fill="none" stroke="#333" strokeWidth="1.4" />
  <Ink x="588.5" y="269" $s={30} $c="#111">2</Ink>
  <Ink x="1195" y="269" $s={30} $c="#111">1</Ink>
  <Ink x="12" y="484" $s={20} $c="#111">B</Ink>
  <Ink x="12" y="934" $s={20} $c="#111">A</Ink>
  <path d="M893 235v26" stroke="#111" strokeWidth="2" /><path d="M880 260h26l-13 22z" fill="#111" />
  <path d="M10 689h14" stroke="#111" strokeWidth="2" /><path d="M24 680v18l17-9z" fill="#111" />
  <Ink x="404" y="366" $s={24} $c="#1010f0" textLength="302" lengthAdjust="spacingAndGlyphs">ELEC3509 - Lab 3: Part</Ink>
  <Ink x="404" y="391" $s={24} $c="#1010f0" textLength="40" lengthAdjust="spacingAndGlyphs">1 &amp;</Ink>
  <Ink x="404" y="416" $s={24} $c="#1010f0" textLength="15" lengthAdjust="spacingAndGlyphs">3</Ink>
  <g fill="none" stroke={WIRE} strokeWidth="1.8">{WIRES.map((p, i) => <polyline key={i} points={p} />)}</g>
  <g fill="none" stroke={STUB} strokeWidth="1.6">{STUBS.map((p, i) => <polyline key={i} points={p} />)}</g>
  <OpBox x={574} y={522} /><OpBox x={574} y={584} />
  <g stroke={BLUE} fill="none"><circle cx="411" cy="553" r="12" strokeWidth="1.4" /><path d="M403 553c3-5 5-3 7 0s4 4 8-1M411 549v9" strokeWidth="1.2" /></g>
  {RESISTORS.map(([x, a, b], i) => <Zig key={i} x={x} a={a} b={b} />)}
  {BJTS.map((q, i) => <Bjt key={i} {...q} />)}
  {SOURCES.map(([x, y], i) => <Source key={i} x={x} y={y} />)}
  {BATTERIES.map(([x, y], i) => <Battery key={i} x={x} y={y} />)}
  {GROUNDS.map(([x, y], i) => <Ground key={i} x={x} y={y} />)}
  <path d="M990 597v11M996 597v11" stroke={BLUE} strokeWidth="1.6" />
  <g fill="#ff20ff">{NODES.map(([x, y], i) => <circle key={i} cx={x} cy={y} r="2.6" />)}</g>
  {PARTS.map(([t, x, y], i) => <Ink key={i} x={x} y={y}>{t}</Ink>)}
  <Ink x="1303" y="549" $c="#ff4040">Vo</Ink>
  {PROBES.map(([k, t, x, y], i) => <g key={i}>
    <ProbeBox $k={k} x={x} y={y} width={probeW(t)} height="9.6" />
    <Probe $k={k} x={x + 1.2} y={y + 8.4}>{t}</Probe>
  </g>)}
</Sheet>;

const TitleIcon = () => <svg width="18" height="18" viewBox="0 0 18 18"><rect width="18" height="18" fill="#222" /><rect x="2" y="2" width="14" height="14" fill="#c8d0e0" /><path d="M3 3l5 6-3 6" stroke="#111" strokeWidth="2" fill="none" /><rect x="10" y="3" width="5" height="4" fill="#e33" /><rect x="9" y="9" width="6" height="5" fill="#27c" /></svg>;
const MenuIcon = () => <svg width="16" height="21" viewBox="0 0 16 21"><rect x=".5" y=".5" width="14" height="19" fill="#fff" stroke="#222" /><path d="M2 3h6l-3 6z" fill="#e22" /><path d="M7 9l6-5v7z" fill="#f2d020" /><path d="M3 10l5 6H3z" fill="#e22" /><rect x="9" y="11" width="4" height="5" fill="#2a2" /><rect y="17" width="15" height="4" fill="#222" /></svg>;
const PageIcon = () => <svg width="15" height="20" viewBox="0 0 16 21"><rect x=".5" y=".5" width="14" height="19" fill="#fff" stroke="#222" /><path d="M2 3h6l-3 6z" fill="#e22" /><path d="M7 9l6-5v7z" fill="#f2d020" /><path d="M3 10l5 6H3z" fill="#e22" /><rect x="9" y="11" width="4" height="5" fill="#2a2" /><rect y="17" width="15" height="4" fill="#222" /></svg>;
const LibIcon = () => <svg width="20" height="20" viewBox="0 0 20 20"><rect x=".5" y=".5" width="19" height="19" fill="#fff" stroke="#222" /><rect x="1" y="1" width="18" height="4" fill="#2a3cc0" /><rect x="3" y="7" width="6" height="9" fill="#111" /><rect x="11" y="7" width="6" height="9" fill="#111" /><path d="M4 9h4M4 13h4M12 11h4" stroke="#fff" /></svg>;
const Ctl = ({ d, w = 14 }) => <svg width={w} height="14" viewBox="0 0 14 14"><path d={d} fill="none" stroke="currentColor" strokeWidth="1.1" /></svg>;

const Windows = () => <svg width="21" height="21" viewBox="0 0 21 21"><path d="M0 3l9-1.3V10H0zM10 1.500L21 0v10H10zM0 11h9v8.300L0 18zM10 11h11v10l-11-1.500z" fill="#fff" /></svg>;
const Search = () => <svg width="21" height="22" viewBox="0 0 21 22"><circle cx="13" cy="8" r="6.5" fill="none" stroke="#fff" strokeWidth="1.4" /><path d="M8.5 13L2 21" stroke="#fff" strokeWidth="1.4" /></svg>;
const TaskView = () => <svg width="24" height="19" viewBox="0 0 24 19"><rect x="5.5" y=".5" width="13" height="18" fill="none" stroke="#fff" /><path d="M3 3H.5v13H3M21 3h2.500v13H21" fill="none" stroke="#fff" /></svg>;
const Folder = () => <svg width="27" height="24" viewBox="0 0 27 24"><path d="M0 2h9l3 3h15v19H0z" fill="#f5d97e" /><rect y="6" width="27" height="18" fill="#ffe18f" /><path d="M9 24v-7l4.500-3 4.500 3v7h-3v-4h-3v4z" fill="#35a5e8" /><rect x="5" y="16" width="17" height="3" fill="#35a5e8" /></svg>;
const OrcadTask = () => <svg width="29" height="29" viewBox="0 0 29 29"><rect width="29" height="29" fill="#d4d4d4" stroke="#555" /><rect x="5" y="7" width="12" height="12" fill="#16e0ea" stroke="#111" /><path d="M3 9h2M3 13h2M3 17h2M17 9h2M17 13h2M8 4v3M12 4v3" stroke="#111" /><path d="M21 3v8h7M21 7h7" stroke="#e22" /><path d="M26 16v10h-6" stroke="#22c" fill="none" /><path d="M11 16v12l3-3 3 4 2-1-2-4h4z" fill="#111" stroke="#fff" strokeWidth=".6" /><path d="M1 22h8M1 25h8" stroke="#fff" /></svg>;
const Chrome = () => <svg width="28" height="28" viewBox="0 0 28 28"><circle cx="14" cy="14" r="14" fill="#3aa64a" /><path d="M14 14L2 7a14 14 0 0 1 24.500 0z" fill="#e0412f" /><path d="M14 14l12.200-7A14 14 0 0 1 14 28z" fill="#f7c924" /><circle cx="14" cy="14" r="6.6" fill="#fff" /><circle cx="14" cy="14" r="5" fill="#4a8ef0" /></svg>;
const PSpiceTask = () => <svg width="28" height="31" viewBox="0 0 28 31"><rect y="6" width="25" height="25" fill="#f0ee50" stroke="#555" /><path d="M2 16l6 10 5-3 4 3 4-3" stroke="#222" fill="none" /><rect x="6" y="0" width="22" height="22" fill="#151f15" stroke="#ddd" /><path d="M9 14l4-7 4 10 5-5 4 2" fill="none" stroke="#2ee23a" strokeWidth="1.4" /><path d="M6 7h22M6 14h22M13 0v22M20 0v22" stroke="#666" strokeWidth=".5" /></svg>;

const Sig = () => <svg width="15" height="15" viewBox="0 0 15 15"><path d="M1 11h2v4H1zM5 8h2v7H5zM9 4h2v11H9zM13 0h2v15h-2z" fill="#fff" /></svg>;
const Pin = () => <svg width="17" height="15" viewBox="0 0 17 15"><path d="M1 7.500h6M7 3h6v9H7zM13 0v15" stroke="#fff" strokeWidth="2" fill="#fff" /></svg>;

export default function App() {
  return <Screen>
    <GlobalStyle />
    <TitleBar>
      <TitleIcon />
      <TitleText>OrCAD Capture CIS - Lite - [/ - (LAB3_PART1AND3 : PAGE1)]</TitleText>
      <WinControls>
        <WinBtn><Ctl d="M1 7h12" /></WinBtn>
        <WinBtn><Ctl d="M1 4h9v9H1zM4 4V1h9v9h-3" /></WinBtn>
        <WinBtn><Ctl d="M1 1l12 12M13 1L1 13" /></WinBtn>
      </WinControls>
    </TitleBar>
    <RemoteBar>
      <RemotePin><Pin /></RemotePin>
      <RemoteSignal><Sig /></RemoteSignal>
      <RemoteIp>134.117.38.243</RemoteIp>
      <RemoteCtl>
        <svg width="12" height="14" viewBox="0 0 12 14"><rect x="1" y="10" width="10" height="3" fill="#fff" /></svg>
        <svg width="14" height="16" viewBox="0 0 14 16"><path d="M1 6h8v9H1zM4 5V1h9v8h-3" fill="none" stroke="#fff" strokeWidth="1.8" /></svg>
        <svg width="14" height="14" viewBox="0 0 14 14"><path d="M1 1l12 12M13 1L1 13" stroke="#fff" strokeWidth="2.6" /></svg>
      </RemoteCtl>
    </RemoteBar>
    <MenuBar>
      <MenuIcon />
      <MenuList>{MENUS.map(m => <MenuItem key={m}>{m}</MenuItem>)}</MenuList>
      <Cadence>cadence<CadenceBar /><CadenceMark>R</CadenceMark></Cadence>
      <ChildCtl>
        <ChildBtn><svg width="10" height="10" viewBox="0 0 10 10"><rect x="1" y="7" width="7" height="2" fill="#8a9cb8" /></svg></ChildBtn>
        <ChildBtn><svg width="11" height="11" viewBox="0 0 11 11"><path d="M1 4h6v6H1zM3 3V1h7v6H8" fill="none" stroke="#8a9cb8" strokeWidth="1.2" /></svg></ChildBtn>
        <ChildBtn><svg width="10" height="10" viewBox="0 0 10 10"><path d="M1 1l8 8M9 1L1 9" stroke="#8a9cb8" strokeWidth="2" /></svg></ChildBtn>
      </ChildCtl>
    </MenuBar>
    <RedRule />
    <ToolRow $h={45} $pad={8}>
      {ROW1A.map(n => <ToolBtn key={n} $mt={-2}><Glyph name={n} /></ToolBtn>)}
      <Combo $w={187} $h={26} $ml={-1} $mt={-2}><CombChevron /></Combo>
      {ROW1B.map(n => <ToolBtn key={n} $mt={-2}><Glyph name={n} /></ToolBtn>)}
      <Combo $w={188} $h={26} $ml={13} $mt={-2}><CombChevron /></Combo>
      {["bino"].map(n => <ToolBtn key={n} $mt={-2}><Glyph name={n} size={24} /></ToolBtn>)}
      <ToolBtn $w={16} $ml={-9} $mt={-2}><Glyph name="drop" size={16} /></ToolBtn>
      <ToolBtn $ml={7} $mt={-2}><Glyph name="prev" size={24} /></ToolBtn>
      <ToolBtn $mt={-2}><Glyph name="next" size={24} /></ToolBtn>
    </ToolRow>
    <RowRule />
    <ToolRow $h={38} $pad={9}>
      <Combo $w={187} $h={26}><ComboSel>ART1AND3-lab3_part1</ComboSel><CombChevron /></Combo>
      {ROW2.map((n, i) => <ToolBtn key={i} $hl={n === "dV" || n === "dI"}><Glyph name={n} /></ToolBtn>)}
    </ToolRow>
    <ToolRow $h={48} $pad={8}>
      {ROW3A.map(n => <ToolBtn key={n}><Glyph name={n} /></ToolBtn>)}
      {ROW3B.map((n, i) => <ToolBtn key={n} $ml={i === 0 ? 14 : 0}><Glyph name={n} /></ToolBtn>)}
    </ToolRow>
    <Body>
      <Workspace>
        <TabStrip>
          <Tab $w={111}><TabLabel $pl={32}>Start Page</TabLabel></Tab>
          <Tab $w={111} $gap={2}><LibIcon /><TabLabel>lab3_part1a...</TabLabel></Tab>
          <Tab $w={114} $active $gap={27}><PageIcon /><TabLabel>PAGE1</TabLabel></Tab>
        </TabStrip>
        <ViewRow>
          <Schematic />
          <VScroll>
            <VBtn><svg width="11" height="7" viewBox="0 0 11 7"><path d="M1 6l4.500-4.500L10 6" fill="none" stroke="#333" strokeWidth="1.8" /></svg></VBtn>
            <VThumb />
            <VTrack />
            <VBtn><svg width="11" height="7" viewBox="0 0 11 7"><path d="M1 1l4.500 4.500L10 1" fill="none" stroke="#333" strokeWidth="1.8" /></svg></VBtn>
          </VScroll>
        </ViewRow>
        <HScroll>
          <HThumb />
          <HArrow width="8" height="12" viewBox="0 0 8 12" $ml={8}><path d="M7 1L2 6l5 5" fill="none" stroke="#bbb" strokeWidth="1.8" /></HArrow>
          <HArrow width="8" height="12" viewBox="0 0 8 12" $ml={1761}><path d="M1 1l5 5-5 5" fill="none" stroke="#bbb" strokeWidth="1.8" /></HArrow>
          <Grip width="9" height="9" viewBox="0 0 9 9"><path d="M7 1h1.500v1.500H7zM4 4h1.500v1.500H4zM7 4h1.500v1.500H7zM1 7h1.500v1.500H1zM4 7h1.500v1.500H4zM7 7h1.500v1.500H7z" fill="#aaa" /></Grip>
        </HScroll>
        <HFoot />
      </Workspace>
      <Palette>{PALETTE.map((n, i) => <PalBtn key={i} $hl={i === 0}><Glyph name={n} /></PalBtn>)}</Palette>
    </Body>
    <StatusBar>
      <StatusCell $w={1111} $pl={3}>Ready</StatusCell>
      <StatusCell $w={535} $pl={6} $rule>0 items selected</StatusCell>
      <StatusCell $w={105} $pl={7}>Scale=100%</StatusCell>
      <StatusCell $w={150} $pl={0}>X=10.50 Y=5.80</StatusCell>
    </StatusBar>
    <StatusGap>
      <GapPart $w={391} $c="#04070e" />
      <GapPart $w={1355} $c="#fff" />
      <GapPart $w={174} $c="#04070e" />
    </StatusGap>
    <Taskbar>
      <TaskBtn $w={60}><Windows /></TaskBtn>
      <TaskBtn $w={60}><Search /></TaskBtn>
      <TaskBtn $w={60}><TaskView /></TaskBtn>
      <TaskBtn $w={61} $ml={4}><FaInternetExplorer size={29} color="#2fa6e6" /></TaskBtn>
      <TaskBtn $w={61}><Folder /><RunLine $inset={5} /></TaskBtn>
      <TaskBtn $w={61} $ml={2} $active><OrcadTask /><RunLine $inset={0} /></TaskBtn>
      <TaskBtn $w={61}><Chrome /><RunLine $inset={5} /></TaskBtn>
      <TaskBtn $w={61}><PSpiceTask /><RunLine $inset={5} /></TaskBtn>
      <Tray>
        <TrayItem $w={30}><svg width="14" height="9" viewBox="0 0 14 9"><path d="M1 8l6-7 6 7" fill="none" stroke="#fff" /></svg></TrayItem>
        <TrayItem $w={32}><svg width="20" height="20" viewBox="0 0 20 20"><path d="M1 2h17v12H1zM9 14v4M5 18h9M1 2h5v6H1" fill="none" stroke="#fff" /></svg></TrayItem>
        <TrayItem $w={28}><svg width="20" height="20" viewBox="0 0 20 20"><path d="M2 7h3l4-4v14l-4-4H2zM12 7c1 2 1 4 0 6M15 4c2 4 2 8 0 12" fill="none" stroke="#fff" /></svg></TrayItem>
        <TrayItem $w={48}>ENG</TrayItem>
        <Clock>2:11 PM<br />7/29/2020</Clock>
        <TrayItem $w={66}><svg width="20" height="20" viewBox="0 0 20 20"><path d="M1 1h18v15h-6l-3 3-3-3H1z" fill="none" stroke="#fff" /></svg></TrayItem>
      </Tray>
    </Taskbar>
  </Screen>;
}
